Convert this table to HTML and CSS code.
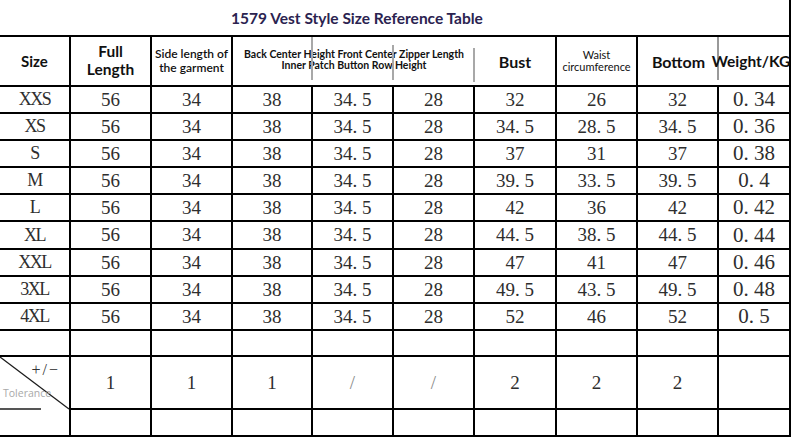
FILE: index.html
```html
<!DOCTYPE html>
<html>
<head>
<meta charset="utf-8">
<link rel="stylesheet" href="styles.css">
</head>
<body>
<div class="sheet">
  <div class="title"><span>1579 Vest Style Size Reference Table</span></div>
  <div class="grid">
    <div class="c h h15">Size</div>
    <div class="c h h16 two">Full<br>Length</div>
    <div class="c h h12 two14">Side length of<br>the garment</div>
    <div class="c h hsm span3 nr">Back Center Height Front Center Zipper Length<br>Inner Patch Button Row Height
      <i class="gl g1"></i><i class="gl g2"></i><i class="gl g3"></i>
    </div>
    <div class="c h h16">Bust</div>
    <div class="c h h12r">Waist<br>circumference</div>
    <div class="c h h16 nr">Bottom<i class="gl g4"></i></div>
    <div class="c h h16 wk"><span class="nw">Weight/KG</span></div>

    <div class="c sz">XXS</div><div class="c n">56</div><div class="c n">34</div><div class="c n">38</div><div class="c n">34<span class="p">.</span>5</div><div class="c n">28</div><div class="c n">32</div><div class="c n">26</div><div class="c n">32</div><div class="c w">0<span class="p">.</span>34</div>
    <div class="c sz">XS</div><div class="c n">56</div><div class="c n">34</div><div class="c n">38</div><div class="c n">34<span class="p">.</span>5</div><div class="c n">28</div><div class="c n">34<span class="p">.</span>5</div><div class="c n">28<span class="p">.</span>5</div><div class="c n">34<span class="p">.</span>5</div><div class="c w">0<span class="p">.</span>36</div>
    <div class="c sz">S</div><div class="c n">56</div><div class="c n">34</div><div class="c n">38</div><div class="c n">34<span class="p">.</span>5</div><div class="c n">28</div><div class="c n">37</div><div class="c n">31</div><div class="c n">37</div><div class="c w">0<span class="p">.</span>38</div>
    <div class="c sz">M</div><div class="c n">56</div><div class="c n">34</div><div class="c n">38</div><div class="c n">34<span class="p">.</span>5</div><div class="c n">28</div><div class="c n">39<span class="p">.</span>5</div><div class="c n">33<span class="p">.</span>5</div><div class="c n">39<span class="p">.</span>5</div><div class="c w">0<span class="p">.</span>4</div>
    <div class="c sz">L</div><div class="c n">56</div><div class="c n">34</div><div class="c n">38</div><div class="c n">34<span class="p">.</span>5</div><div class="c n">28</div><div class="c n">42</div><div class="c n">36</div><div class="c n">42</div><div class="c w">0<span class="p">.</span>42</div>
    <div class="c sz">XL</div><div class="c n">56</div><div class="c n">34</div><div class="c n">38</div><div class="c n">34<span class="p">.</span>5</div><div class="c n">28</div><div class="c n">44<span class="p">.</span>5</div><div class="c n">38<span class="p">.</span>5</div><div class="c n">44<span class="p">.</span>5</div><div class="c w">0<span class="p">.</span>44</div>
    <div class="c sz">XXL</div><div class="c n">56</div><div class="c n">34</div><div class="c n">38</div><div class="c n">34<span class="p">.</span>5</div><div class="c n">28</div><div class="c n">47</div><div class="c n">41</div><div class="c n">47</div><div class="c w">0<span class="p">.</span>46</div>
    <div class="c sz">3XL</div><div class="c n">56</div><div class="c n">34</div><div class="c n">38</div><div class="c n">34<span class="p">.</span>5</div><div class="c n">28</div><div class="c n">49<span class="p">.</span>5</div><div class="c n">43<span class="p">.</span>5</div><div class="c n">49<span class="p">.</span>5</div><div class="c w">0<span class="p">.</span>48</div>
    <div class="c sz">4XL</div><div class="c n">56</div><div class="c n">34</div><div class="c n">38</div><div class="c n">34<span class="p">.</span>5</div><div class="c n">28</div><div class="c n">52</div><div class="c n">46</div><div class="c n">52</div><div class="c w">0<span class="p">.</span>5</div>

    <div class="c"></div><div class="c"></div><div class="c"></div><div class="c"></div><div class="c"></div><div class="c"></div><div class="c"></div><div class="c"></div><div class="c"></div><div class="c"></div>

    <div class="c tol">
      <svg class="diag" viewBox="0 0 69 53" preserveAspectRatio="none"><line x1="0" y1="0" x2="69" y2="52" /></svg>
      <span class="pm">+/−</span>
      <span class="tl">Tolerance</span>
      <i class="tb"></i>
    </div>
    <div class="c n">1</div><div class="c n">1</div><div class="c n">1</div><div class="c sl">/</div><div class="c sl">/</div><div class="c n">2</div><div class="c n">2</div><div class="c n">2</div><div class="c"></div>

    <div class="c"></div><div class="c"></div><div class="c"></div><div class="c"></div><div class="c"></div><div class="c"></div><div class="c"></div><div class="c"></div><div class="c"></div><div class="c"></div>
  </div>
</div>
</body>
</html>
```
FILE: styles.css
```css
html, body {
  margin: 0;
  padding: 0;
  background: #fff;
}
.sheet {
  width: 791px;
}
.title {
  height: 35px;
  box-sizing: border-box;
  border-right: 2px solid #000;
  display: flex;
  align-items: center;
  justify-content: center;
  padding-right: 75px;
  padding-top: 1px;
  font-family: Lato, "Liberation Sans", sans-serif;
  font-weight: 700;
  font-size: 15.5px;
  color: #2b2350;
}
.grid {
  display: grid;
  grid-template-columns: 71px 81px 81px 80px 81px 81px 82px 81px 81px 72px;
  grid-template-rows: 50px repeat(5, 27px) 28px repeat(3, 27px) 26px 53px 27px;
  border-top: 2px solid #000;
}
.c {
  box-sizing: border-box;
  border-right: 2px solid #000;
  border-bottom: 2px solid #000;
  display: flex;
  align-items: center;
  justify-content: center;
  text-align: center;
  position: relative;
  min-width: 0;
  white-space: nowrap;
  color: #2e2e2e;
}
.nr { border-right: none; }
.h {
  font-family: Lato, "Liberation Sans", sans-serif;
  color: #111;
}
.h15 { font-size: 15px; font-weight: 700; }
.h16 { font-size: 16px; font-weight: 700; }
.two { font-size: 15.5px; line-height: 17.5px; padding-bottom: 1px; }
.h12 { font-size: 12px; font-weight: 600; line-height: 14px; }
.h12r { font-size: 11px; font-weight: 400; line-height: 12.5px; }
.hsm { font-size: 10.5px; font-weight: 700; line-height: 11.5px; padding-bottom: 2px; }
.span3 { grid-column: span 3; }
.wk { padding-right: 6px; font-size: 15.5px; }
.nw { white-space: nowrap; flex: none; }
.gl {
  position: absolute;
  width: 2px;
  background: #a8a8a8;
}
.g1 { left: 78px; top: 0; height: 43px; }
.g2 { left: 159px; top: 8px; height: 35px; }
.g3 { left: 240px; top: 11px; height: 34px; }
.g4 { left: 79px; top: 0; height: 43px; background: #999; }
.n, .sz, .w, .sl {
  font-family: "Liberation Serif", "DejaVu Serif", serif;
  font-weight: 400;
}
.n { font-size: 19px; }
.sz { font-size: 18px; letter-spacing: -1.5px; }
.w { font-size: 21px; }
.p { margin-right: .25em; }
.sl { font-size: 19px; color: #8a8a8a; }
.tol { border-bottom: none; }
.diag {
  position: absolute;
  left: 0;
  top: 0;
  width: 69px;
  height: 53px;
}
.diag line {
  stroke: #1a1a1a;
  stroke-width: 1.3;
}
.pm {
  position: absolute;
  right: 9px;
  top: 4px;
  font-family: "Liberation Serif", serif;
  font-size: 16px;
  letter-spacing: 2px;
  color: #333;
}
.tl {
  position: absolute;
  left: 3px;
  top: 29px;
  font-family: "Open Sans", "Liberation Sans", sans-serif;
  font-size: 10.5px;
  color: #a9a9a9;
}
.tb {
  position: absolute;
  left: 0;
  bottom: 0;
  width: 41px;
  height: 2px;
  background: #555;
}
```
